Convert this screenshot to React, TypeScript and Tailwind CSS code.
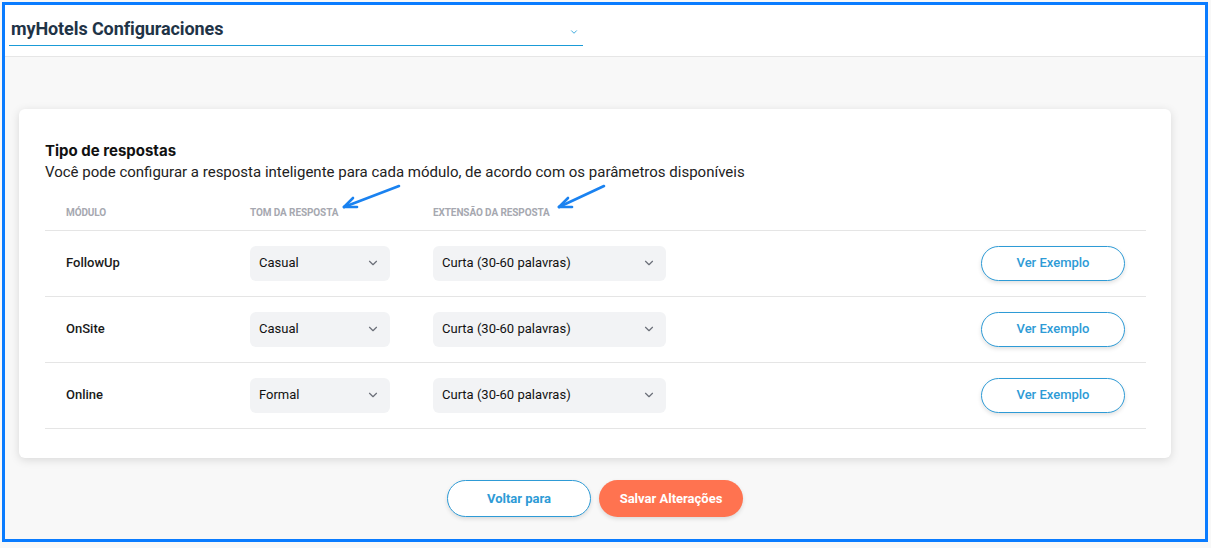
import React from "react";

const rows = [
  { modulo: "FollowUp", tom: "Casual", extensao: "Curta (30-60 palavras)" },
  { modulo: "OnSite", tom: "Casual", extensao: "Curta (30-60 palavras)" },
  { modulo: "Online", tom: "Formal", extensao: "Curta (30-60 palavras)" },
];

const Chevron = ({ className }: { className?: string }) => (
  <svg viewBox="0 0 24 24" className={className} fill="none" stroke="currentColor" strokeWidth="2" strokeLinecap="round" strokeLinejoin="round">
    <path d="M6 9l6 6 6-6" />
  </svg>
);

const FakeSelect = ({ value, width }: { value: string; width: string }) => (
  <div className={`${width} h-[35px] rounded-md bg-[#f2f3f5] flex items-center justify-between pl-[9px] pr-[10px] text-[13px] text-[#111]`}>
    <span>{value}</span>
    <Chevron className="w-[14px] h-[14px] text-[#6b6f78]" />
  </div>
);

// annotation arrow, tail at top-right, tip at bottom-left
const Arrow = ({ className, w }: { className: string; w: number }) => (
  <svg viewBox={`0 0 ${w} 26`} className={className} fill="none" stroke="#1a82f0" strokeWidth="2.6" strokeLinecap="round" strokeLinejoin="round">
    <path d={`M${w - 2} 2 L3 23`} />
    <path d="M3 23 L12 14" />
    <path d="M3 23 L16 23" />
  </svg>
);

const App = () => {
  return (
    <div className="w-[1211px] h-[548px] bg-[#f8f8f8] pl-[2px] pt-[2px] font-['Roboto',sans-serif]">
      <div className="w-[1206px] h-[540px] border-[3px] border-[#0a7cff] bg-[#f8f8f8] flex flex-col">
        <div className="h-[52px] bg-white border-b border-[#e6e6e6] pl-[4px] pt-[12px] shrink-0">
          <div className="w-[574px] h-[29px] border-b border-[#1a9bd7] flex items-start justify-between pl-[2px] pr-[4px]">
            <span className="text-[18px] font-bold text-[#1f3447] leading-[24px] tracking-[-0.1px]">myHotels Configuraciones</span>
            <Chevron className="w-[10px] h-[10px] text-[#1a9bd7] mt-[10px]" />
          </div>
        </div>

        <div className="px-[14px] pt-[52px]">
          <div className="relative w-[1152px] h-[349px] bg-white rounded-md shadow-[0_2px_10px_rgba(0,0,0,0.13)] pt-[32px] px-[26px]">
            <h2 className="text-[15px] font-bold text-[#111] leading-[20px] font-['Inter',sans-serif]">Tipo de respostas</h2>
            <p className="text-[15px] text-[#222] leading-[22px]">
              Você pode configurar a resposta inteligente para cada módulo, de acordo com os parâmetros disponíveis
            </p>

            <Arrow w={60} className="absolute left-[322px] top-[75px] w-[60px] h-[26px]" />
            <Arrow w={50} className="absolute left-[537px] top-[75px] w-[50px] h-[26px]" />

            <div className="w-[1101px] mt-[14px]">
              <div className="flex items-center h-[34px] pb-[2px] border-b border-[#e5e5e5] text-[10px] font-bold text-[#a6a8b0] uppercase tracking-[-0.1px]">
                <div className="w-[205px] pl-[21px]">Módulo</div>
                <div className="w-[183px]">Tom da resposta</div>
                <div>Extensão da resposta</div>
              </div>
              {rows.map((r) => (
                <div key={r.modulo} className="flex items-center h-[66px] border-b border-[#e5e5e5] pb-[1px]">
                  <div className="w-[205px] pl-[21px] text-[13px] font-medium text-[#1a1a1a]">{r.modulo}</div>
                  <div className="w-[183px]">
                    <FakeSelect value={r.tom} width="w-[140px]" />
                  </div>
                  <FakeSelect value={r.extensao} width="w-[233px]" />
                  <div className="flex-1 flex justify-end pr-[21px]">
                    <button className="w-[144px] h-[35px] rounded-full border border-[#2e9bd6] bg-white text-[#2e9bd6] text-[13px] font-medium shadow-[0_2px_4px_rgba(0,0,0,0.12)]">
                      Ver Exemplo
                    </button>
                  </div>
                </div>
              ))}
            </div>
          </div>
        </div>

        <div className="flex justify-center gap-[8px] mt-[22px] pr-[20px]">
          <button className="w-[144px] h-[37px] rounded-full border border-[#2e9bd6] bg-white text-[#2e9bd6] text-[13px] font-bold shadow-[0_2px_4px_rgba(0,0,0,0.12)]">
            Voltar para
          </button>
          <button className="w-[144px] h-[37px] rounded-full bg-[#ff7350] text-white text-[13px] font-bold shadow-[0_2px_4px_rgba(0,0,0,0.12)]">
            Salvar Alterações
          </button>
        </div>
      </div>
    </div>
  );
};

export default App;
